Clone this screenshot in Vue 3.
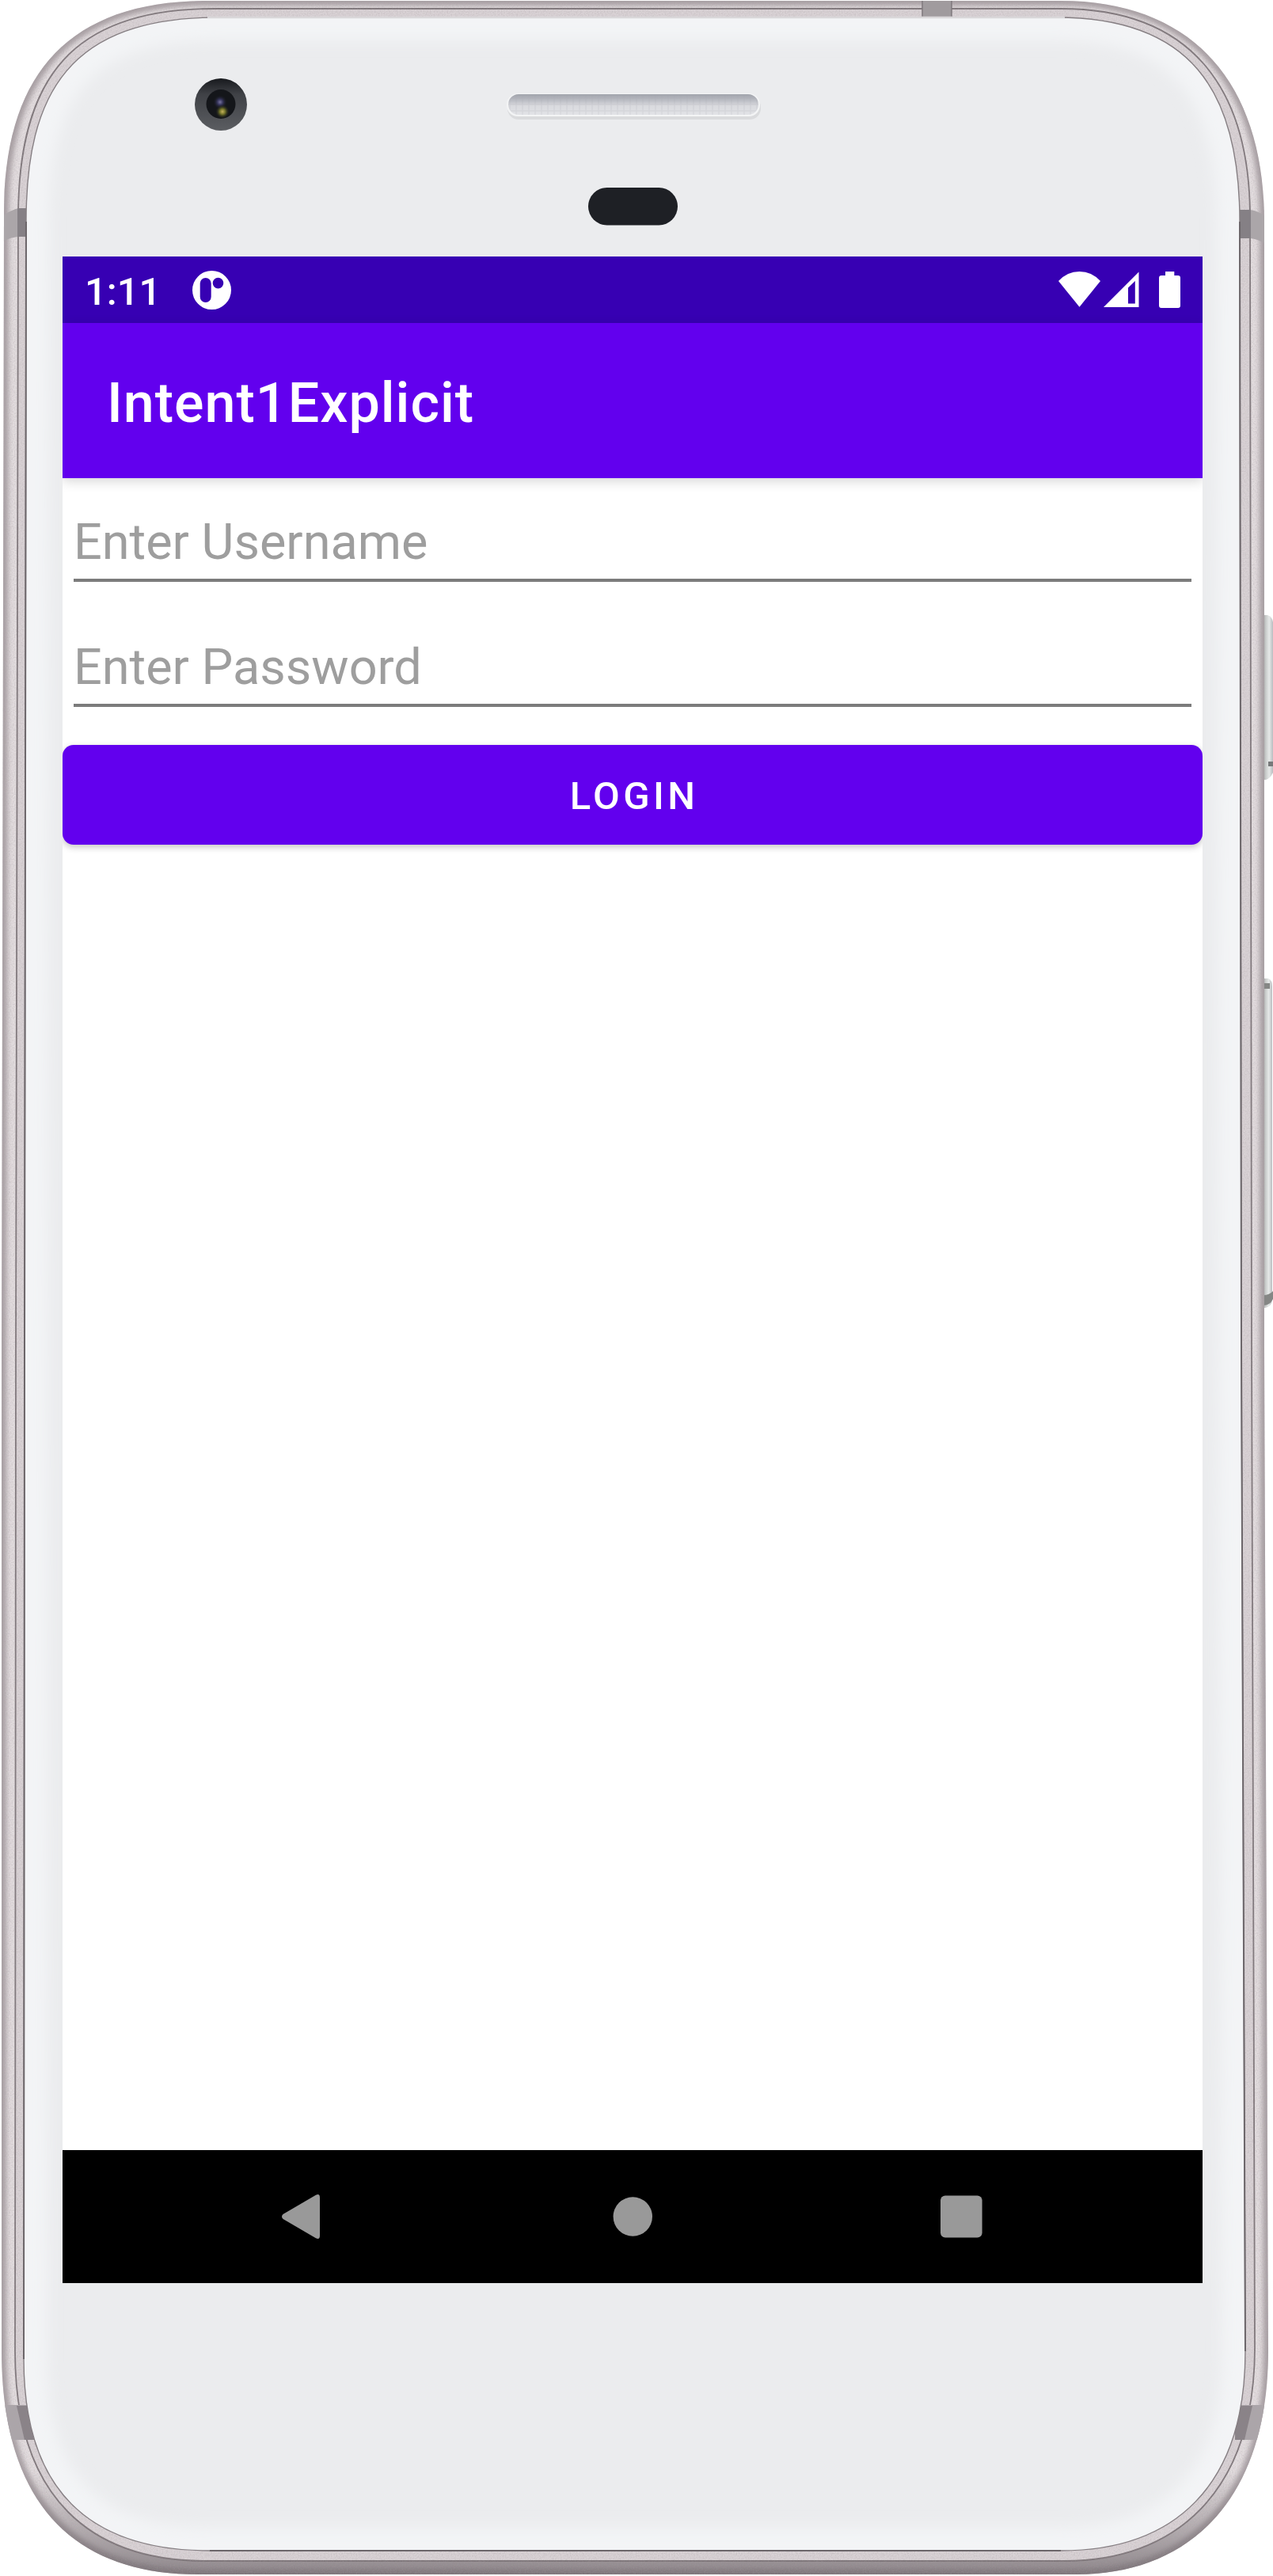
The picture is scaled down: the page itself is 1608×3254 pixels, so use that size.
<script setup>
import { ref } from 'vue'

const fields = ref([
  { id: 'username', hint: 'Enter Username', type: 'text', value: '' },
  { id: 'password', hint: 'Enter Password', type: 'password', value: '' },
])

const outer =
  'M5 270C5 93 87 1 262 1H1340C1507 1 1597 105 1597 280V1700L1602 2970C1602 3159 1501 3252 1360 3252H250C93 3252 2 3162 2 2970V1700Z'
const seam =
  'M23 275C23 96 93 11 270 11H1340C1501 11 1579 107 1579 275L1581 1700L1585 2965C1585 3152 1481 3235 1345 3235H260C117 3235 19 3158 19 2970L20 1700Z'
const face =
  'M33 280C33 117 88 22 275 22H1335C1502 22 1566 112 1566 280L1568 1700L1573 2970C1573 3141 1483 3222 1340 3222H265C112 3222 30 3145 30 2980L31 1700Z'
</script>

<template>
  <div class="device">
    <svg class="shell" viewBox="0 0 1608 3254" aria-hidden="true">
      <defs>
        <linearGradient id="keyGrad" x1="0" x2="1" y1="0" y2="0">
          <stop offset="0" stop-color="#a9aaa9" />
          <stop offset=".25" stop-color="#c9cccb" />
          <stop offset=".6" stop-color="#e6e9e8" />
          <stop offset="1" stop-color="#b9bcbf" />
        </linearGradient>
        <linearGradient id="grille" x1="0" x2="0" y1="0" y2="1">
          <stop offset="0" stop-color="#a0a3ab" />
          <stop offset=".3" stop-color="#bbbdc4" />
          <stop offset=".55" stop-color="#d9dade" />
          <stop offset="1" stop-color="#e2e3e7" />
        </linearGradient>
        <linearGradient id="camRing" x1="0" x2="0" y1="0" y2="1">
          <stop offset="0" stop-color="#17191d" />
          <stop offset=".3" stop-color="#3f4146" />
          <stop offset="1" stop-color="#5b5d61" />
        </linearGradient>
        <linearGradient id="baseShade" x1="0" x2="0" y1="0" y2="1">
          <stop offset="0" stop-color="#6f676c" stop-opacity="0" />
          <stop offset="1" stop-color="#6f676c" stop-opacity=".75" />
        </linearGradient>
        <radialGradient id="glint">
          <stop offset="0" stop-color="#c8b45c" />
          <stop offset=".4" stop-color="#6f7028" />
          <stop offset="1" stop-color="#15171c" stop-opacity="0" />
        </radialGradient>
        <radialGradient id="glintBlue">
          <stop offset="0" stop-color="#77739f" />
          <stop offset=".4" stop-color="#35345a" />
          <stop offset="1" stop-color="#15171c" stop-opacity="0" />
        </radialGradient>
        <pattern id="mesh" width="8" height="8" patternUnits="userSpaceOnUse">
          <path d="M0 4H8M4 0V8" stroke="#a3a5ae" stroke-opacity=".16" stroke-width="1.5" />
        </pattern>
        <filter id="soft" x="-5%" y="-5%" width="110%" height="110%">
          <feGaussianBlur stdDeviation="9" />
        </filter>
        <filter id="edge" x="-5%" y="-5%" width="110%" height="110%">
          <feGaussianBlur stdDeviation="3.2" />
        </filter>
        <filter id="grain" x="0" y="0" width="100%" height="100%">
          <feTurbulence type="fractalNoise" baseFrequency=".6" numOctaves="2" seed="4" />
          <feColorMatrix values="0 0 0 0 .38  0 0 0 0 .34  0 0 0 0 .36  1.6 0 0 0 -.62" />
        </filter>
        <clipPath id="outerClip"><path :d="outer" /></clipPath>
        <clipPath id="faceClip"><path :d="face" /></clipPath>
        <clipPath id="rimClip">
          <path :d="outer + face" clip-rule="evenodd" />
        </clipPath>
      </defs>

      <!-- side keys -->
      <path d="M1596 777H1601Q1607 779 1608 786V976Q1604 984 1599 985H1596Z" fill="url(#keyGrad)" />
      <path d="M1602 962H1608V968H1602Z" fill="#77797a" />
      <path d="M1596 1236H1602Q1607 1238 1607 1246V1642Q1606 1651 1598 1652H1596Z" fill="url(#keyGrad)" />
      <path d="M1596 1242H1604V1249H1596ZM1596 1636Q1603 1636 1608 1631V1641Q1604 1649 1596 1649Z" fill="#858785" />

      <!-- metal frame -->
      <g clip-path="url(#outerClip)">
        <path :d="outer" fill="#e3dddf" />
        <path :d="outer" fill="none" stroke="#a79fa3" stroke-width="12" filter="url(#edge)" />
        <rect x="0" y="3120" width="1608" height="134" fill="url(#baseShade)" />
        <path :d="seam" fill="#d9d2d5" stroke="#7f777b" stroke-width="1.8" />
      </g>
      <g clip-path="url(#rimClip)">
        <rect width="1608" height="3254" filter="url(#grain)" opacity=".4" />
      </g>

      <!-- antenna breaks -->
      <g clip-path="url(#outerClip)">
        <path d="M0 275Q12 266 23 263H36V299H23Q12 300 0 307Z" fill="#aba6a9" />
        <path d="M22 263H36V299H22Z" fill="#858085" />
        <path d="M1564 265H1579Q1592 267 1600 275V309Q1590 302 1579 301H1564Z" fill="#aba6a9" />
        <path d="M1564 265H1580V301H1564Z" fill="#858085" />
        <path d="M0 3038H46V3082H0Z" fill="#aba5a9" />
        <path d="M21 3039H46V3082H31Z" fill="#8a8388" />
        <path d="M1560 3038H1606V3082H1560Z" fill="#aba5a9" />
        <path d="M1560 3039H1582L1572 3082H1560Z" fill="#8a8388" />
        <path d="M1165 0H1202V22H1165Z" fill="#a09b9e" />
        <path d="M1165 0V22M1202 0V22" stroke="#7f797c" stroke-width="1.5" />
      </g>

      <!-- front glass -->
      <g clip-path="url(#faceClip)">
        <path :d="face" fill="#ebecee" />
        <path :d="face" fill="none" stroke="#f3f4f6" stroke-width="58" filter="url(#soft)" />
      </g>
      <path :d="face" fill="none" stroke="#857e82" stroke-width="1.4" />
      <path d="M1566 280L1568 1700L1573 2970M33 280L31 1700L30 2980M265 3222H1340" fill="none" stroke="#6c666a" stroke-width="2" />
      <path d="M262 22H1345" stroke="#d9d7d9" stroke-width="2.5" />

      <!-- camera -->
      <circle cx="279" cy="132" r="33" fill="url(#camRing)" />
      <circle cx="279" cy="131.5" r="18.5" fill="#14161a" />
      <circle cx="278" cy="129" r="9" fill="url(#glintBlue)" />
      <circle cx="281" cy="141" r="9" fill="url(#glint)" />

      <!-- earpiece and sensor -->
      <rect x="641" y="122" width="320" height="29" rx="14" fill="#dadbdd" />
      <rect x="640" y="118" width="320" height="29" rx="14" fill="#f3f4f5" />
      <rect x="642" y="119" width="316" height="26" rx="13" fill="url(#grille)" />
      <rect x="642" y="119" width="316" height="26" rx="13" fill="url(#mesh)" />
      <rect x="743" y="237" width="113" height="47.5" rx="23.7" fill="#1e2025" />
    </svg>

    <main class="screen">
      <header class="status">
        <span class="clock">1:11</span>
        <svg class="notice" viewBox="0 0 49 49" aria-hidden="true">
          <path
            fill="#fff"
            fill-rule="evenodd"
            d="M24.5 0a24.5 24.5 0 1 1 0 49a24.5 24.5 0 0 1 0-49ZM16.7 9a7 7 0 0 0-7 7v17a7 7 0 0 0 14 0V16a7 7 0 0 0-7-7ZM32.5 8.8a6.8 6.8 0 1 0 0 13.6a6.8 6.8 0 0 0 0-13.6Z"
          />
        </svg>
        <svg class="wifi" viewBox="0 0 53 45" aria-hidden="true">
          <path fill="#fff" d="M0 12Q11 0 26.5 0T53 12L26.5 44.7Z" />
        </svg>
        <svg class="signal" viewBox="0 0 45 45" aria-hidden="true">
          <path fill="#fff" fill-rule="evenodd" d="M44.5 .5V45H0ZM39.8 12L31 20.5V40.5H39.8Z" />
        </svg>
        <svg class="battery" viewBox="0 0 27 46" aria-hidden="true">
          <path fill="#fff" d="M8 0H19.3V5H24Q27 5 27 8V43Q27 46 24 46H3Q0 46 0 43V8Q0 5 3 5H8Z" />
        </svg>
      </header>

      <div class="appbar">
        <h1>Intent1Explicit</h1>
      </div>

      <form class="form" @submit.prevent>
        <label v-for="field in fields" :key="field.id" class="field">
          <input v-model="field.value" :type="field.type" :placeholder="field.hint" />
        </label>
        <button class="login" type="submit">LOGIN</button>
      </form>

      <nav class="nav">
        <svg viewBox="0 0 60 60" aria-hidden="true">
          <path
            fill="#999"
            d="M6.5 27Q3.5 30 6.5 33L48 57.2Q53 59.5 53 54V6Q53 .5 48 2.8Z"
          />
        </svg>
        <svg viewBox="0 0 60 60" aria-hidden="true"><circle cx="31.3" cy="30" r="24.7" fill="#999" /></svg>
        <svg viewBox="0 0 60 60" aria-hidden="true">
          <rect x="4" y="3.5" width="52.6" height="53" rx="6" fill="#999" />
        </svg>
      </nav>
    </main>
  </div>
</template>

<style>
body {
  margin: 0;
  background: #fff;
}
</style>

<style scoped>
.device {
  position: relative;
  box-sizing: border-box;
  width: 1608px;
  height: 3254px;
  padding: 324px 89px 370px 79px;
  overflow: hidden;
  font-family: Roboto, 'Liberation Sans', sans-serif;
}

.shell {
  position: absolute;
  inset: 0;
  width: 1608px;
  height: 3254px;
}

.screen {
  position: relative;
  display: flex;
  flex-direction: column;
  width: 1440px;
  height: 2560px;
  overflow: hidden;
  background: #fff;
}

.status {
  display: flex;
  align-items: flex-start;
  box-sizing: border-box;
  height: 84px;
  padding: 0 28px;
  background: #3700b3;
}

.clock {
  width: 136px;
  color: #fff;
  font-size: 49px;
  font-weight: 500;
  line-height: 89px;
}

.notice {
  width: 49px;
  height: 49px;
  margin-top: 18px;
}

.wifi {
  width: 53px;
  height: 45px;
  margin: 19px 4px 0 auto;
}

.signal {
  width: 45px;
  height: 45px;
  margin: 19px 25px 0 0;
}

.battery {
  width: 27px;
  height: 46px;
  margin-top: 19px;
}

.appbar {
  position: relative;
  box-sizing: border-box;
  height: 196px;
  padding-left: 56px;
  background: #6200ee;
  box-shadow: 0 4px 14px rgba(0, 0, 0, 0.16);
}

h1 {
  margin: 0;
  color: #fff;
  font-size: 70px;
  font-weight: 500;
  letter-spacing: 1px;
  line-height: 202px;
}

.form {
  display: flex;
  flex: 1;
  flex-direction: column;
}

.field {
  box-sizing: border-box;
  height: 158px;
  padding: 0 14px 27px;
}

input {
  display: block;
  box-sizing: border-box;
  width: 100%;
  height: 131px;
  padding: 34px 0 0;
  border: 0;
  border-bottom: 4px solid #7c7c7c;
  outline: 0;
  background: none;
  color: #000;
  font: 400 63px/93px Roboto, 'Liberation Sans', sans-serif;
}

input::placeholder {
  color: #9e9e9e;
  opacity: 1;
}

.login {
  height: 126px;
  margin: 21px 0 0;
  padding: 4px 0 0 4px;
  border: 0;
  border-radius: 14px;
  background: #6200ee;
  box-shadow: 0 3px 9px rgba(0, 0, 0, 0.24);
  color: #fff;
  font: 500 49px/122px Roboto, 'Liberation Sans', sans-serif;
  letter-spacing: 4.375px;
}

.nav {
  display: flex;
  align-items: center;
  justify-content: space-between;
  box-sizing: border-box;
  height: 168px;
  padding: 0 275px 0 272px;
  background: #000;
}

.nav svg {
  width: 60px;
  height: 60px;
}
</style>
